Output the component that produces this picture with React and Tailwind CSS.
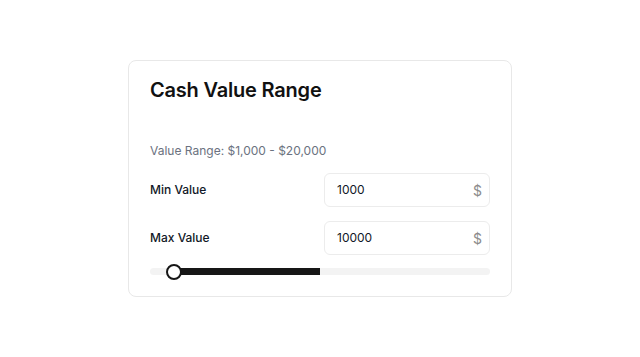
import { useState } from 'react';

const font = { fontFamily: 'Inter, "Liberation Sans", sans-serif' };

function MoneyInput({ label, value }) {
    return (
        <div className="flex items-center justify-between">
            <span className="text-[12px] font-medium text-[#111827]">{label}</span>
            <div className="flex h-[34px] w-[166px] items-center justify-between rounded-md border border-[#ececec] bg-white pl-[12px] pr-[7px]">
                <span className="text-[12px] text-[#111827]">{value}</span>
                <span className="text-[14px] text-[#8b8b8b]">$</span>
            </div>
        </div>
    );
}

export default function App() {
    const [min] = useState(1000);
    const [max] = useState(10000);

    return (
        <div className="flex h-[357px] w-full items-center justify-center bg-white" style={font}>
            <div className="flex w-[384px] flex-col rounded-lg border border-[#e8e8e8] bg-white px-[21px] pt-[15px] pb-[16px]">
                <h2 className="text-[20px] font-semibold leading-[28px] tracking-[-0.2px] text-[#111111]">Cash Value Range</h2>

                <p className="mt-[37px] text-[12px] leading-[20px] text-[#6b7280]">Value Range: $1,000 - $20,000</p>

                <div className="mt-[12px] flex flex-col gap-[14px]">
                    <MoneyInput label="Min Value" value={min} />
                    <MoneyInput label="Max Value" value={max} />
                </div>

                <div className="relative mt-[9px] h-[16px] w-full">
                    <div className="absolute top-[4px] left-0 h-[7px] w-full rounded-full bg-[#f3f3f3]" />
                    <div className="absolute top-[4px] left-[24px] h-[7px] w-[146px] bg-[#161616]" />
                    <div className="absolute top-0 left-[16px] h-[16px] w-[16px] rounded-full border-2 border-[#161616] bg-white" />
                </div>
            </div>
        </div>
    );
}
